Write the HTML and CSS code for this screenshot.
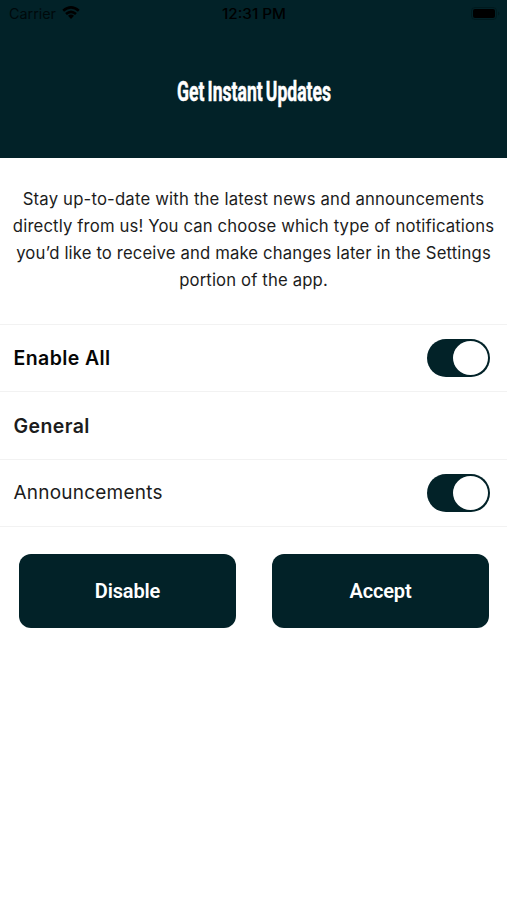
FILE: index.html
```html
<!DOCTYPE html>
<html lang="en">
<head>
<meta charset="utf-8">
<title>Get Instant Updates</title>
<link rel="stylesheet" href="styles.css">
</head>
<body>
<header class="header">
  <div class="status">
    <div class="carrier"><svg class="carrier-text" width="48" height="18"><text x="0" y="12.5" textLength="47" lengthAdjust="spacingAndGlyphs">Carrier</text></svg>
      <svg class="wifi" width="18" height="14" viewBox="0 0 18 14"><path d="M1.2 4.8Q9-2 16.8 4.8M4 8Q9 3.6 14 8" fill="none" stroke="#000" stroke-width="2.6"/><path d="M6 9.8Q9 7.4 12 9.8L9 13Z"/></svg>
    </div>
    <svg class="clock" width="66" height="18"><text x="0" y="12.5" textLength="64" lengthAdjust="spacingAndGlyphs">12:31 PM</text></svg>
    <svg class="battery" width="29" height="13" viewBox="0 0 29 13"><rect x=".5" y=".5" width="25" height="12" rx="3.5" fill="none" stroke="#001a1e"/><rect x="2" y="2" width="22" height="9" rx="2"/><path fill="#001a1e" d="M27 4.5q3 2 0 4z"/></svg>
  </div>
  <h1 class="title"><svg width="170" height="40"><text x="8" y="27" textLength="154" lengthAdjust="spacingAndGlyphs">Get Instant Updates</text></svg></h1>
</header>
<main>
  <p class="intro"><span class="wide">Stay up-to-date with the latest news and announcements</span><span>directly from us! You can choose which type of notifications</span><span>you’d like to receive and make changes later in the Settings</span><span>portion of the app.</span></p>
  <section class="list">
    <div class="row bold all"><span>Enable All</span><span class="toggle"></span></div>
    <div class="row bold"><span>General</span></div>
    <div class="row"><span>Announcements</span><span class="toggle"></span></div>
  </section>
  <div class="actions"><button>Disable</button><button>Accept</button></div>
</main>
</body>
</html>
```
FILE: styles.css
```css
* { box-sizing: border-box; }
body { margin: 0; background: #fff; color: #1c1c1c; font-family: Inter, sans-serif; }
.header { height: 158px; background: #022228; display: flex; flex-direction: column; }
.status { height: 28px; padding: 6px 7px 0 9px; display: grid; grid-template-columns: 1fr 66px 1fr; align-items: start; font-size: 14px; }
.status svg { display: block; }
.carrier { display: flex; gap: 5px; }
.carrier-text { fill: #00090b; }
.clock { font-weight: 500; }
.battery { justify-self: end; margin-top: 1px; }
.title { margin: 46px 0 0; height: 40px; font: 700 28.5px Roboto, sans-serif; word-spacing: -2px; }
.title svg { fill: #fff; stroke: #fff; stroke-width: .5px; display: block; margin: 0 auto; overflow: visible; }
.intro { height: 166px; margin: 0; padding: 28px 8px 0; text-align: center; font-size: 16.7px; line-height: 27px; letter-spacing: .14px; }
.intro span { display: block; white-space: nowrap; }
.intro .wide { letter-spacing: .19px; }
.row { height: 67.4px; padding: 0 17px 0 13.5px; border-top: 1px solid #f2f2f2; display: flex; align-items: center; justify-content: space-between; font-size: 19px; letter-spacing: .22px; }
.row:last-child { height: 68.2px; border-bottom: 1px solid #f2f2f2; }
.bold { font-size: 19.5px; font-weight: 600; letter-spacing: .4px; }
.all { color: #060606; }
.toggle { width: 63px; height: 38px; border-radius: 19px; background: #022228; padding: 2px; display: flex; justify-content: flex-end; }
.toggle::after { content: ""; width: 35px; height: 34px; border-radius: 50%; background: #fff; }
.actions { display: flex; justify-content: space-between; padding: 27px 18px 0 19px; }
button { width: 217px; height: 74px; border: 0; border-radius: 12px; background: #022228; color: #fff; font: 600 20px Roboto, sans-serif; letter-spacing: -.15px; }
```
